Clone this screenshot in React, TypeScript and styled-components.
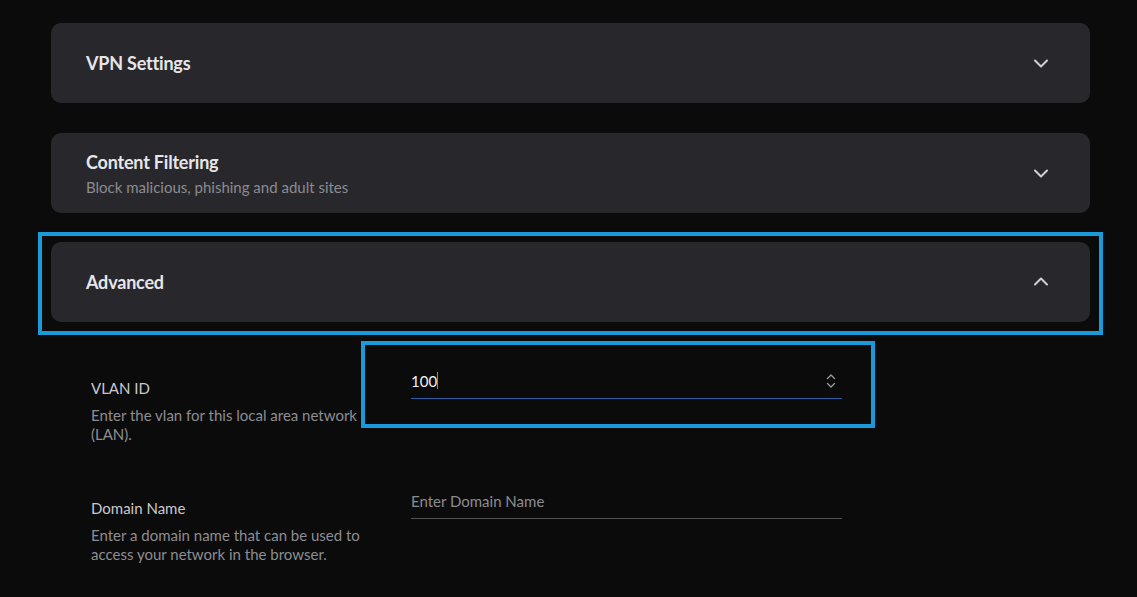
import React from 'react';
import styled, { createGlobalStyle } from 'styled-components';

const GlobalStyle = createGlobalStyle`
  html, body {
    margin: 0;
    padding: 0;
    background: #0b0b0c;
    font-family: Lato, 'Open Sans', sans-serif;
  }
`;

const Page = styled.div`
  width: 1039px;
  padding: 23px 0 0 51px;
  display: flex;
  flex-direction: column;
  gap: 30px;
`;

const Card = styled.div`
  height: 80px;
  box-sizing: border-box;
  border-radius: 10px;
  background: #28282c;
  padding: 0 40px 0 35px;
  display: flex;
  align-items: center;
  justify-content: space-between;
`;

const Highlight = styled.div`
  margin: -11px -13px -13px;
  border: 4px solid #1a9ad9;
  padding: 6px 9px 9px;
`;

const TitleBlock = styled.div`
  display: flex;
  flex-direction: column;
  gap: 5px;
`;

const Title = styled.div`
  font-size: 18px;
  font-weight: 700;
  color: #e6e6ea;
  letter-spacing: -0.2px;
`;

const Subtitle = styled.div`
  font-size: 15px;
  color: #8b8b90;
`;

const Form = styled.div`
  display: flex;
  flex-direction: column;
  gap: 55px;
  padding: 57px 0 0 91px;
`;

const Row = styled.div`
  display: grid;
  grid-template-columns: 320px 431px;
  align-items: start;
`;

const Label = styled.div`
  font-size: 15px;
  color: #c9c9cd;
  margin-bottom: 9px;
`;

const Description = styled.div`
  font-size: 15px;
  line-height: 19px;
  color: #8d8d92;
  width: 270px;
`;

const Field = styled.div<{ $active?: boolean }>`
  position: relative;
  height: 34px;
  box-sizing: border-box;
  margin-top: -14px;
  padding-bottom: 2px;
  display: flex;
  align-items: center;
  justify-content: space-between;
  border-bottom: 1px solid ${({ $active }) => ($active ? '#2f5ea8' : '#505055')};
`;

const Value = styled.span`
  font-size: 15px;
  color: #f2f2f4;
  display: flex;
  align-items: center;
`;

const Caret = styled.span`
  display: inline-block;
  width: 1px;
  height: 17px;
  background: #5b8ff0;
`;

const TextInput = styled.input`
  background: transparent;
  border: none;
  outline: none;
  padding: 0;
  width: 100%;
  font-family: Lato, sans-serif;
  font-size: 15px;
  color: #f2f2f4;
  &::placeholder {
    color: #8b8b90;
  }
`;

const FieldHighlight = styled.span`
  position: absolute;
  left: -50px;
  right: -33px;
  top: -24px;
  bottom: -30px;
  border: 4px solid #1a9ad9;
  pointer-events: none;
`;

const Chevron = ({ up }: { up?: boolean }) => (
  <svg width="18" height="18" viewBox="0 0 18 18" fill="none">
    <path
      d={up ? 'M3 11.5L9 5.5L15 11.5' : 'M3 6.5L9 12.5L15 6.5'}
      stroke="#cfcfd4"
      strokeWidth="2"
      strokeLinecap="round"
      strokeLinejoin="round"
    />
  </svg>
);

const Spinner = () => (
  <svg width="12" height="18" viewBox="0 0 12 18" fill="none" style={{ marginRight: 5 }}>
    <path d="M2.5 6.5L6 3L9.5 6.5" stroke="#9a9aa0" strokeWidth="1.3" strokeLinecap="round" strokeLinejoin="round" />
    <path d="M2.5 11.5L6 15L9.5 11.5" stroke="#9a9aa0" strokeWidth="1.3" strokeLinecap="round" strokeLinejoin="round" />
  </svg>
);

export default function App() {
  return (
    <>
      <GlobalStyle />
      <Page>
        <Card>
          <Title>VPN Settings</Title>
          <Chevron />
        </Card>
        <Card>
          <TitleBlock>
            <Title>Content Filtering</Title>
            <Subtitle>Block malicious, phishing and adult sites</Subtitle>
          </TitleBlock>
          <Chevron />
        </Card>
        <Highlight>
          <Card>
            <Title>Advanced</Title>
            <Chevron up />
          </Card>
        </Highlight>
      </Page>
      <Form>
        <Row>
          <div>
            <Label>VLAN ID</Label>
            <Description>Enter the vlan for this local area network (LAN).</Description>
          </div>
          <Field $active>
            <Value>
              100
              <Caret />
            </Value>
            <Spinner />
            <FieldHighlight />
          </Field>
        </Row>
        <Row>
          <div>
            <Label>Domain Name</Label>
            <Description>Enter a domain name that can be used to access your network in the browser.</Description>
          </div>
          <Field>
            <TextInput placeholder="Enter Domain Name" />
          </Field>
        </Row>
      </Form>
    </>
  );
}
